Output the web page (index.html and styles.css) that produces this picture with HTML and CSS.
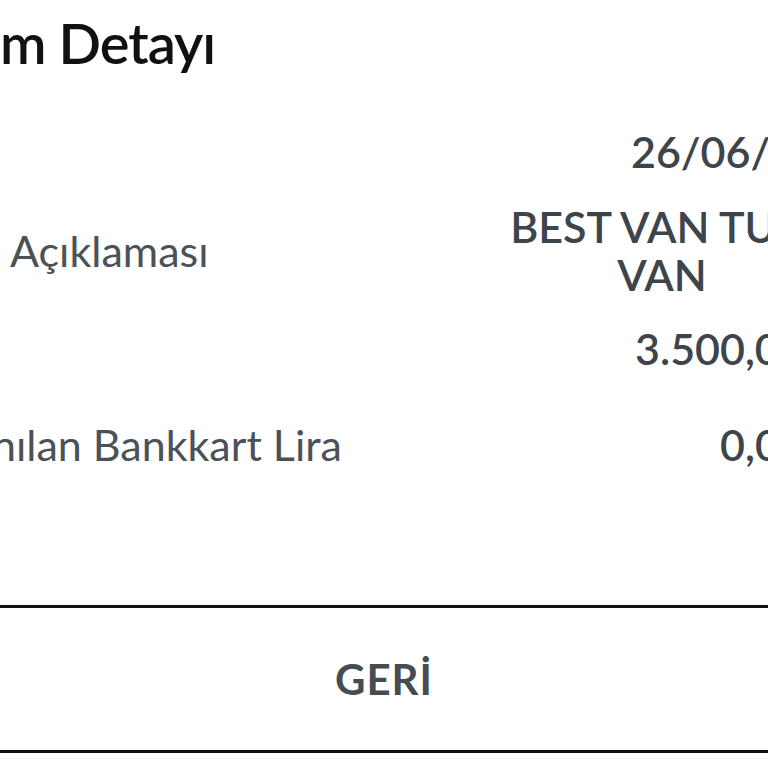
FILE: index.html
```html
<!DOCTYPE html>
<html lang="tr">
<head>
<meta charset="utf-8">
<title>İşlem Detayı</title>
<link rel="stylesheet" href="styles.css">
</head>
<body>
<div class="screen">
  <h1 class="title">m Detayı</h1>
  <div class="rows">
    <div class="row row-first">
      <span class="label"></span>
      <span class="value value-date">26/06/2023</span>
    </div>
    <div class="row row-second">
      <span class="label label-desc">Açıklaması</span>
      <span class="value value-multi">BEST VAN TUR.<br>VAN</span>
    </div>
    <div class="row row-third">
      <span class="label"></span>
      <span class="value">3.500,00 TL</span>
    </div>
    <div class="row row-fourth">
      <span class="label label-lira">nılan Bankkart Lira</span>
      <span class="value">0,00 TL</span>
    </div>
  </div>
  <div class="actions">
    <button class="back-button" type="button">GERİ</button>
  </div>
</div>
</body>
</html>
```

FILE: styles.css
```css
html, body {
  margin: 0;
  padding: 0;
  background: #ffffff;
}

.screen {
  width: 768px;
  height: 768px;
  overflow: hidden;
  padding-top: 8px;
  box-sizing: border-box;
  font-family: Lato, "Open Sans", "Liberation Sans", sans-serif;
}

.title {
  margin: 0;
  font-size: 56px;
  line-height: 70px;
  font-weight: 600;
  letter-spacing: -1px;
  color: #111111;
  white-space: nowrap;
}

.rows {
  width: 862px;
  margin-top: 50px;
  display: flex;
  flex-direction: column;
}

.row {
  display: flex;
  justify-content: space-between;
  align-items: center;
  font-size: 43px;
  line-height: 48px;
}

.row-second { margin-top: 27px; }
.row-third { margin-top: 26px; }
.row-fourth { margin-top: 48px; }

.label {
  color: #4b5257;
  font-weight: 400;
  white-space: nowrap;
}

.label-desc { padding-left: 10px; }
.label-lira { margin-left: -8px; }

.value {
  color: #3d454b;
  font-weight: 600;
  white-space: nowrap;
  text-align: right;
}

.value-date { margin-right: -8px; }

.value-multi {
  width: 400px;
  text-align: center;
}

.actions {
  margin-top: 136px;
  border-top: 3px solid #111111;
  border-bottom: 3px solid #111111;
  height: 142px;
  display: flex;
}

.back-button {
  flex: 1;
  border: 0;
  background: transparent;
  font-family: Lato, "Open Sans", "Liberation Sans", sans-serif;
  font-size: 42px;
  font-weight: 700;
  letter-spacing: 1px;
  color: #454c52;
  padding: 0;
}
```
